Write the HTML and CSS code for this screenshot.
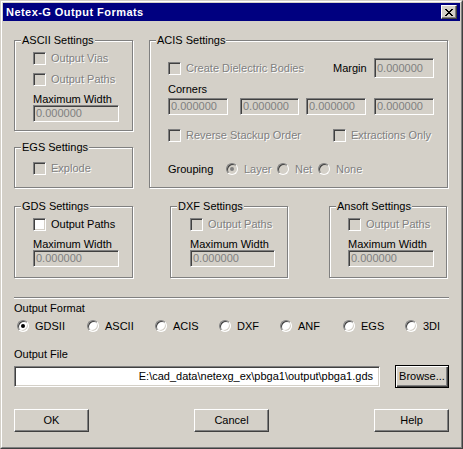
FILE: index.html
```html
<!DOCTYPE html>
<html>
<head>
<meta charset="utf-8">
<link rel="stylesheet" href="styles.css">
</head>
<body>
<div class="window">
  <div class="frame">
    <div class="titlebar">
      <span class="title">Netex-G Output Formats</span>
      <span class="close"><svg width="8" height="7" viewBox="0 0 8 7" shape-rendering="crispEdges"><path fill="#000" d="M0 0h2v1H0z M6 0h2v1H6z M1 1h2v1H1z M5 1h2v1H5z M2 2h4v1H2z M3 3h2v1H3z M2 4h4v1H2z M1 5h2v1H1z M5 5h2v1H5z M0 6h2v1H0z M6 6h2v1H6z"/></svg></span>
    </div>
    <div class="body">
      <div class="row-top">
        <div class="col-left">
          <div class="group g-ascii">
            <div class="gtitle">ASCII Settings</div>
            <div class="check dis r1"><span class="cb"></span><span class="lbl">Output Vias</span></div>
            <div class="check dis r2"><span class="cb"></span><span class="lbl">Output Paths</span></div>
            <div class="flabel">Maximum Width</div>
            <div class="input">0.000000</div>
          </div>
          <div class="group g-egs">
            <div class="gtitle">EGS Settings</div>
            <div class="check dis r-egs"><span class="cb"></span><span class="lbl">Explode</span></div>
          </div>
        </div>
        <div class="group g-acis">
          <div class="gtitle">ACIS Settings</div>
          <div class="acis-row1">
            <div class="check dis"><span class="cb"></span><span class="lbl">Create Dielectric Bodies</span></div>
            <div class="margin-cell"><span class="plain">Margin</span><div class="input tall w60">0.000000</div></div>
          </div>
          <div class="flabel corners-lbl">Corners</div>
          <div class="corners">
            <div class="input w60">0.000000</div>
            <div class="input w59">0.000000</div>
            <div class="input w60">0.000000</div>
            <div class="input w60">0.000000</div>
          </div>
          <div class="acis-row3">
            <div class="check dis"><span class="cb"></span><span class="lbl">Reverse Stackup Order</span></div>
            <div class="check dis"><span class="cb"></span><span class="lbl">Extractions Only</span></div>
          </div>
          <div class="grouping">
            <span class="plain">Grouping</span>
            <div class="radio dis"><span class="rb on"></span><span class="lbl">Layer</span></div>
            <div class="radio dis"><span class="rb"></span><span class="lbl">Net</span></div>
            <div class="radio dis"><span class="rb"></span><span class="lbl">None</span></div>
          </div>
        </div>
      </div>
      <div class="row-mid">
        <div class="group g-small g-gds">
          <div class="gtitle">GDS Settings</div>
          <div class="check r-sm"><span class="cb"></span><span class="lbl">Output Paths</span></div>
          <div class="flabel">Maximum Width</div>
          <div class="input w86">0.000000</div>
        </div>
        <div class="group g-small g-dxf">
          <div class="gtitle">DXF Settings</div>
          <div class="check dis r-sm"><span class="cb"></span><span class="lbl">Output Paths</span></div>
          <div class="flabel">Maximum Width</div>
          <div class="input w85">0.000000</div>
        </div>
        <div class="group g-small g-ansoft">
          <div class="gtitle">Ansoft Settings</div>
          <div class="check dis r-sm"><span class="cb"></span><span class="lbl">Output Paths</span></div>
          <div class="flabel">Maximum Width</div>
          <div class="input w86">0.000000</div>
        </div>
      </div>
      <div class="sep"></div>
      <div class="flabel fmt-lbl">Output Format</div>
      <div class="formats">
        <div class="radio"><span class="rb on"></span><span class="lbl">GDSII</span></div>
        <div class="radio"><span class="rb"></span><span class="lbl">ASCII</span></div>
        <div class="radio"><span class="rb"></span><span class="lbl">ACIS</span></div>
        <div class="radio"><span class="rb"></span><span class="lbl">DXF</span></div>
        <div class="radio"><span class="rb"></span><span class="lbl">ANF</span></div>
        <div class="radio"><span class="rb"></span><span class="lbl">EGS</span></div>
        <div class="radio"><span class="rb"></span><span class="lbl">3DI</span></div>
      </div>
      <div class="flabel file-lbl">Output File</div>
      <div class="file-row">
        <div class="file">E:\cad_data\netexg_ex\pbga1\output\pbga1.gds</div>
        <div class="btn default browse">Browse...</div>
      </div>
      <div class="btn-row">
        <div class="btn">OK</div>
        <div class="btn">Cancel</div>
        <div class="btn">Help</div>
      </div>
    </div>
  </div>
</div>
</body>
</html>
```
FILE: styles.css
```css
html, body {
  margin: 0;
  padding: 0;
  background: #d4d0c8;
}
body {
  font-family: "Liberation Sans", Arial, sans-serif;
  font-size: 11px;
  color: #000;
}
.window {
  width: 463px;
  height: 449px;
  box-sizing: border-box;
  border: 1px solid;
  border-color: #d4d0c8 #404040 #404040 #d4d0c8;
  background: #d4d0c8;
}
.frame {
  height: 100%;
  box-sizing: border-box;
  border: 1px solid;
  border-color: #fff #808080 #808080 #fff;
  padding: 1px;
}
.titlebar {
  height: 18px;
  background: #000080;
  display: flex;
  align-items: center;
  justify-content: space-between;
  padding: 0 3px 0 3px;
}
.title {
  color: #fff;
  font-weight: bold;
  line-height: 13px;
  letter-spacing: 0.45px;
}
.close {
  width: 16px;
  height: 14px;
  box-sizing: border-box;
  background: #d4d0c8;
  border: 1px solid;
  border-color: #fff #404040 #404040 #fff;
  box-shadow: inset -1px -1px #808080;
  display: flex;
  align-items: center;
  justify-content: center;
  padding-right: 1px;
}
.close svg { display: block; }

.body {
  padding: 19px 11px 0 11px;
}
.row-top {
  display: flex;
  align-items: flex-start;
}
.col-left {
  width: 119px;
  margin-right: 16px;
}
.group {
  box-sizing: border-box;
  border: 1px solid #808080;
  box-shadow: inset 1px 1px #fff, 1px 1px #fff;
  padding-left: 18px;
}
.gtitle {
  width: fit-content;
  margin: -7px 0 0 6px;
  padding: 0 1px;
  background: #d4d0c8;
  line-height: 13px;
  position: relative;
  left: -18px;
}
.g-ascii { height: 91px; }
.g-egs { height: 41px; margin-top: 16px; }
.g-acis { width: 299px; height: 148px; padding-right: 13px; }

.check, .radio {
  display: flex;
  align-items: center;
  height: 13px;
  line-height: 13px;
  white-space: nowrap;
}
.radio { height: 12px; }
.check .lbl { margin-left: 5px; }
.radio .lbl { margin-left: 6px; }
.dis .lbl {
  color: #808080;
  text-shadow: 1px 1px 0 #fff;
}
.cb {
  flex: none;
  width: 13px;
  height: 13px;
  box-sizing: border-box;
  border: 1px solid;
  border-color: #808080 #fff #fff #808080;
  box-shadow: inset 1px 1px #404040, inset -1px -1px #d4d0c8;
  background: #fff;
}
.dis .cb { background: #d4d0c8; }
.rb {
  flex: none;
  width: 12px;
  height: 12px;
  box-sizing: border-box;
  border-radius: 50%;
  border: 1px solid;
  border-color: #808080 #fff #fff #808080;
  box-shadow: inset 1px 1px #404040, inset -1px -1px #d4d0c8;
  background: #fff;
  display: flex;
  align-items: center;
  justify-content: center;
}
.dis .rb { background: #d4d0c8; }
.rb.on::after {
  content: "";
  width: 4px;
  height: 4px;
  border-radius: 50%;
  background: #000;
}
.dis .rb.on::after { background: #808080; }

.r1 { margin-top: 5px; }
.r2 { margin-top: 8px; }
.r-egs { margin-top: 8px; }
.r-sm { margin-top: 5px; }

.flabel {
  line-height: 12px;
  margin-top: 7px;
  white-space: nowrap;
}
.plain { white-space: nowrap; }

.input {
  box-sizing: border-box;
  width: 86px;
  height: 17px;
  border: 1px solid;
  border-color: #808080 #fff #fff #808080;
  box-shadow: inset 1px 1px #404040, inset -1px -1px #d4d0c8;
  background: #d4d0c8;
  color: #808080;
  padding-left: 2px;
  line-height: 15px;
  white-space: nowrap;
  overflow: hidden;
}
.input.tall { height: 20px; line-height: 18px; }
.w60 { width: 60px; }
.w59 { width: 59px; }
.w86 { width: 86px; }
.w85 { width: 85px; }

.acis-row1 {
  display: grid;
  grid-template-columns: 165px 1fr;
  align-items: center;
  height: 20px;
  margin-top: 11px;
}
.margin-cell {
  display: flex;
  align-items: center;
  justify-content: space-between;
}
.corners-lbl { margin-top: 5px; }
.corners {
  display: grid;
  grid-template-columns: 72px 66px 68px 60px;
  margin-top: 3px;
}
.acis-row3 {
  display: grid;
  grid-template-columns: 165px 1fr;
  margin-top: 14px;
}
.grouping {
  display: grid;
  grid-template-columns: 58px 51px 41px auto;
  align-items: center;
  height: 12px;
  line-height: 12px;
  margin-top: 21px;
}

.row-mid {
  display: flex;
  margin-top: 18px;
}
.g-small { height: 72px; }
.g-gds { width: 119px; }
.g-dxf { width: 118px; margin-left: 37px; padding-left: 19px; }
.g-dxf .gtitle { left: -19px; }
.g-ansoft { width: 118px; margin-left: 41px; }

.sep {
  height: 0;
  border-top: 1px solid #808080;
  border-bottom: 1px solid #fff;
  margin-top: 19px;
}
.fmt-lbl { margin-top: 3px; }
.formats {
  display: grid;
  grid-template-columns: 70px 68px 64px 61px 63px 62px auto;
  padding-left: 3px;
  margin-top: 6px;
}
.file-lbl { margin-top: 16px; }
.file-row {
  display: flex;
  align-items: center;
  margin-top: 5px;
  height: 23px;
}
.file {
  box-sizing: border-box;
  width: 366px;
  height: 21px;
  border: 1px solid;
  border-color: #808080 #fff #fff #808080;
  box-shadow: inset 1px 1px #404040, inset -1px -1px #d4d0c8;
  background: #fff;
  text-align: right;
  padding-right: 6px;
  line-height: 19px;
  white-space: nowrap;
  overflow: hidden;
}
.btn {
  box-sizing: border-box;
  width: 75px;
  height: 23px;
  border: 1px solid;
  border-color: #fff #404040 #404040 #fff;
  box-shadow: inset -1px -1px #808080;
  background: #d4d0c8;
  display: flex;
  align-items: center;
  justify-content: center;
  line-height: 13px;
}
.btn.default {
  border-color: #000;
  box-shadow: inset 1px 1px #fff, inset -1px -1px #404040, inset -2px -2px #808080;
}
.browse {
  width: 54px;
  margin-left: 15px;
}
.btn-row {
  display: flex;
  justify-content: space-between;
  margin-top: 21px;
}
```
